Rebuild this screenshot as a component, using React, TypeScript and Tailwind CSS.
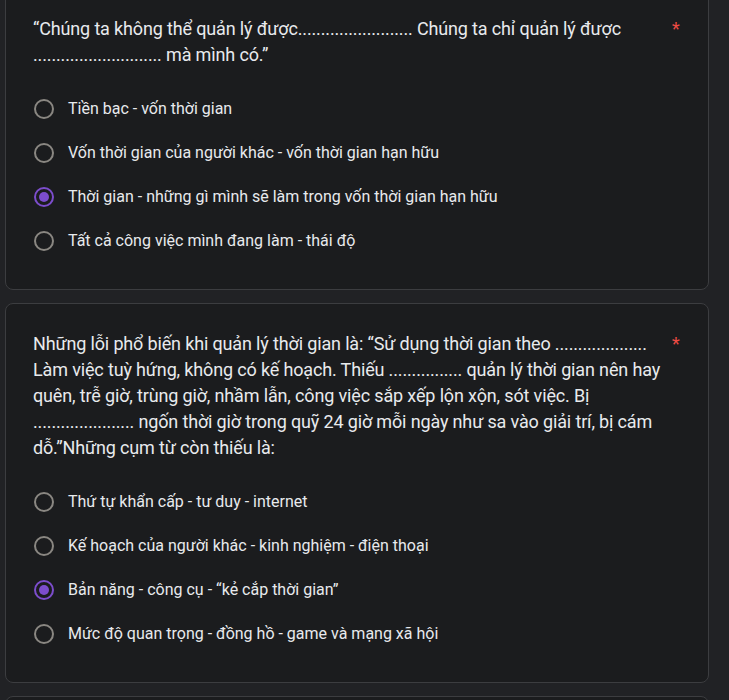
const dots = (n: number) => ".".repeat(n);

const questions = [
  {
    text: `“Chúng ta không thể quản lý được${dots(25)} Chúng ta chỉ quản lý được ${dots(28)} mà mình có.”`,
    options: [
      "Tiền bạc - vốn thời gian",
      "Vốn thời gian của người khác - vốn thời gian hạn hữu",
      "Thời gian - những gì mình sẽ làm trong vốn thời gian hạn hữu",
      "Tất cả công việc mình đang làm - thái độ",
    ],
    selected: 2,
  },
  {
    text: `Những lỗi phổ biến khi quản lý thời gian là: “Sử dụng thời gian theo ${dots(20)} Làm việc tuỳ hứng, không có kế hoạch. Thiếu ${dots(16)} quản lý thời gian nên hay quên, trễ giờ, trùng giờ, nhầm lẫn, công việc sắp xếp lộn xộn, sót việc. Bị ${dots(22)} ngốn thời giờ trong quỹ 24 giờ mỗi ngày như sa vào giải trí, bị cám dỗ.”Những cụm từ còn thiếu là:`,
    options: [
      "Thứ tự khẩn cấp - tư duy - internet",
      "Kế hoạch của người khác - kinh nghiệm - điện thoại",
      "Bản năng - công cụ - “kẻ cắp thời gian”",
      "Mức độ quan trọng - đồng hồ - game và mạng xã hội",
    ],
    selected: 2,
  },
];

function Radio({ checked }: { checked: boolean }) {
  return (
    <div
      className={
        "w-5 h-5 rounded-full border-2 flex items-center justify-center shrink-0 " +
        (checked ? "border-[#7c4dcc]" : "border-[#8a8782]")
      }
    >
      {checked && <div className="w-2.5 h-2.5 rounded-full bg-[#7c4dcc]" />}
    </div>
  );
}

function QuestionCard({ q, first }: { q: (typeof questions)[number]; first?: boolean }) {
  return (
    <div
      className={
        "bg-[#1b1c1e] border border-[#3c3d40] rounded-lg pl-[27px] pr-[24px] pt-[27px] pb-[26px] " +
        (first ? "-mt-[12px]" : "")
      }
    >
      <div className="flex gap-[5px]">
        <div className="flex-1 text-[18px] leading-[26px] text-[#e8eaed] tracking-[-0.15px]">{q.text}</div>
        <span className="text-[#ee4b44] text-[18px] leading-[26px] w-[12px]">*</span>
      </div>
      <div className="mt-[19px] flex flex-col">
        {q.options.map((o, i) => (
          <div key={i} className="flex items-center h-[44px] pl-[1px]">
            <Radio checked={i === q.selected} />
            <span className="ml-[14px] text-[16px] text-[#e8eaed]">{o}</span>
          </div>
        ))}
      </div>
    </div>
  );
}

export default function App() {
  return (
    <div className="w-full h-[700px] overflow-hidden bg-[#212225] font-['Roboto',sans-serif]">
      <div className="w-[704px] ml-[5px] flex flex-col gap-[13px]">
        {questions.map((q, i) => (
          <QuestionCard key={i} q={q} first={i === 0} />
        ))}
        <div className="bg-[#1b1c1e] border border-[#3c3d40] rounded-lg h-[200px]" />
      </div>
    </div>
  );
}
